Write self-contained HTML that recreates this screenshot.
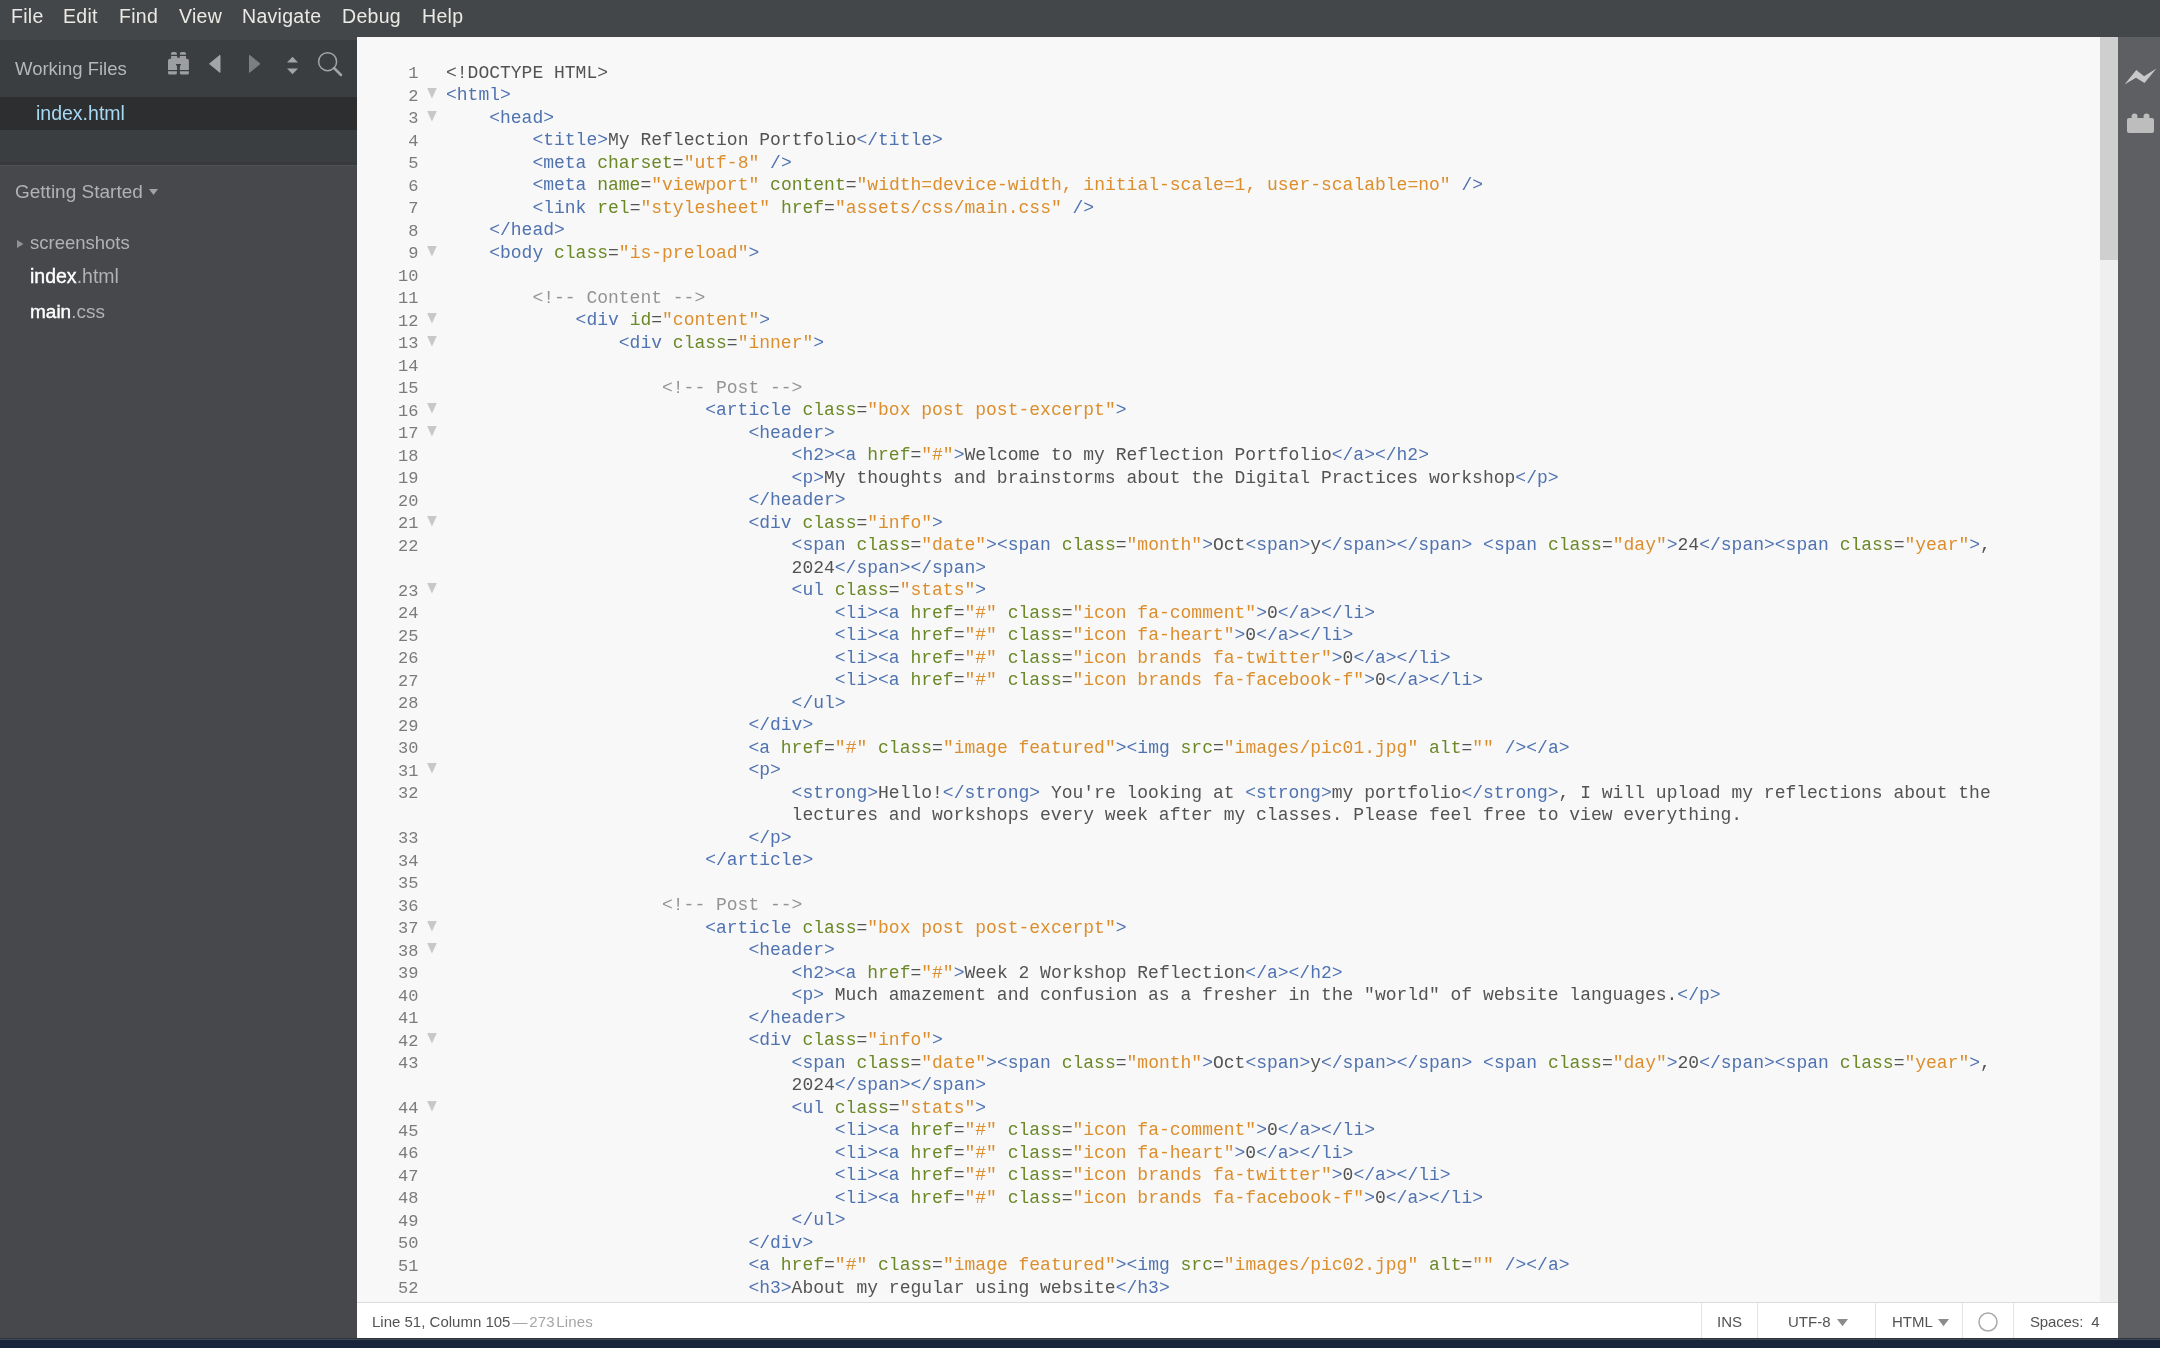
<!DOCTYPE html>
<html><head><meta charset="utf-8">
<style>
html,body{margin:0;padding:0;width:2160px;height:1348px;overflow:hidden;background:#47484b;}
body{position:relative;font-family:"Liberation Sans",sans-serif;}
#menubar{will-change:transform;position:absolute;left:0;top:0;width:2160px;height:40px;background:#44474a;}
#menubar span{position:absolute;top:5px;font-size:19.5px;letter-spacing:0.3px;color:#ebe9e4;line-height:22px;}
#sidebar{will-change:transform;position:absolute;left:0;top:40px;width:357px;height:1298px;background:#47484b;}
#wshead{position:absolute;left:0;top:0;width:357px;height:57px;background:#3b3e40;}
#wshead .ttl{position:absolute;left:15px;top:18px;font-size:18.5px;color:#b5b7b9;line-height:22px;}
#wssel{position:absolute;left:0;top:57px;width:357px;height:33px;background:#2d2e30;}
#wssel span{position:absolute;left:36px;top:5px;font-size:19.5px;color:#a6d9f4;line-height:22px;}
#wsrest{position:absolute;left:0;top:90px;width:357px;height:35px;background:linear-gradient(#3b3e40 0,#3b3e40 32px,#38393c 32px);}
#wsborder{position:absolute;left:0;top:125px;width:357px;height:1px;background:#505155;}
.side{position:absolute;font-size:18.5px;line-height:22px;color:#b0b2b4;}
#editor{position:absolute;left:357px;top:37px;width:1761px;height:1265px;background:#f8f8f8;overflow:hidden;}
#code{position:absolute;left:0;top:0;width:2160px;height:1302px;will-change:transform;}
.ln{position:absolute;left:357px;width:61.5px;margin-top:1.6px;text-align:right;font-family:"Liberation Mono",monospace;font-size:17px;line-height:22.5px;color:#7b7b7b;}
.fd{position:absolute;left:427px;width:10px;height:11px;}
.cl{position:absolute;white-space:pre;font-family:"Liberation Mono",monospace;font-size:18px;line-height:22.5px;color:#535353;}
b{font-weight:normal}
b.t{color:#4f72b0}
b.a{color:#6b8826}
b.s{color:#dc8e2c}
b.c{color:#949494}
#sbtrack{position:absolute;left:2100px;top:37px;width:18px;height:1265px;background:#efefef;}
#sbthumb{position:absolute;left:2100px;top:37px;width:18px;height:223px;background:#cfcfcf;}
#toolbar{position:absolute;left:2118px;top:37px;width:42px;height:1301px;background:#5e5f62;}
#status{will-change:transform;position:absolute;left:357px;top:1302px;width:1761px;height:36px;background:#fff;border-top:1px solid #dcdcdc;box-sizing:border-box;}
#status>span{position:absolute;font-size:15px;line-height:18px;color:#535353;margin-top:1.5px;}
.dv{position:absolute;top:0;width:1px;height:36px;background:#e3e3e3;}
.tri{position:absolute;width:0;height:0;border-left:5.5px solid transparent;border-right:5.5px solid transparent;border-top:7.5px solid #8a8a8a;}
#taskbar{position:absolute;left:0;top:1338px;width:2160px;height:10px;background:linear-gradient(#2f333a 0,#2f333a 1px,#3e4854 1px,#3e4854 2px,#182439 2px);}
</style></head><body>
<div id="menubar">
<span style="left:11px">File</span>
<span style="left:63px">Edit</span>
<span style="left:119px">Find</span>
<span style="left:179px">View</span>
<span style="left:242px">Navigate</span>
<span style="left:342px">Debug</span>
<span style="left:422px">Help</span>
</div>
<div id="sidebar">
 <div id="wshead"><span class="ttl">Working Files</span>
  <svg style="position:absolute;left:155px;top:8px" width="190" height="40" viewBox="155 48 190 40">
   <g fill="#9d9ea1">
    <path d="M170.9 54.8 v-1 a1.8 1.8 0 0 1 1.8 -1.8 h2.4 a1.8 1.8 0 0 1 1.8 1.8 v1 z"/>
    <path d="M179.9 54.8 v-1 a1.8 1.8 0 0 1 1.8 -1.8 h2.5 a1.8 1.8 0 0 1 1.8 1.8 v1 z"/>
    <path d="M171.1 56 h6 v1.8 h2.7 v-1.8 h6.2 v2.7 h0.9 a2 2 0 0 1 2 2 v9.3 h-20.9 v-9.3 a2 2 0 0 1 2 -2 h1.1 z M175.8 64 h5.3 l-1.3 2.7 v3.3 h-2.7 v-3.3 z" fill-rule="evenodd"/>
    <path d="M168 71.2 h8.9 v1.8 a1.6 1.6 0 0 1 -1.6 1.6 h-5.7 a1.6 1.6 0 0 1 -1.6 -1.6 z"/>
    <path d="M179.9 71.2 h9 v1.8 a1.6 1.6 0 0 1 -1.6 1.6 h-5.8 a1.6 1.6 0 0 1 -1.6 -1.6 z"/>
   </g>
   <path d="M209.5 63.8 L220 55.3 L220 72.4 Z" fill="#a3a4a6" stroke="#a3a4a6" stroke-width="1" stroke-linejoin="round"/>
   <path d="M260 63.8 L249.5 55.3 L249.5 72.4 Z" fill="#7c7e81" stroke="#7c7e81" stroke-width="1" stroke-linejoin="round"/>
   <path d="M287 62.5 L292.5 56.7 L298 62.5 Z M287 68.5 L292.5 74.3 L298 68.5 Z" fill="#a3a4a6"/>
   <circle cx="327.6" cy="61.7" r="9" fill="none" stroke="#a3a4a6" stroke-width="1.5"/>
   <path d="M334 68 L341 75" stroke="#a3a4a6" stroke-width="2.5" stroke-linecap="round"/>
  </svg>
 </div>
 <div id="wssel"><span>index.html</span></div>
 <div id="wsrest"></div>
 <div id="wsborder"></div>
 <span class="side" style="left:15px;top:141px;font-size:19px">Getting Started</span>
 <svg style="position:absolute;left:149px;top:149px" width="10" height="8"><path d="M0 0 H9 L4.5 6 Z" fill="#a0a2a4"/></svg>
 <svg style="position:absolute;left:17px;top:200px" width="8" height="10"><path d="M0 0 L6.5 4 L0 8 Z" fill="#909295"/></svg>
 <span class="side" style="left:30px;top:191.5px">screenshots</span>
 <span class="side" style="left:30px;top:225px;font-size:19.5px"><span style="color:#fff;-webkit-text-stroke:0.4px #fff">index</span>.html</span>
 <span class="side" style="left:30px;top:261px;font-size:19px"><span style="color:#fff;-webkit-text-stroke:0.4px #fff">main</span>.css</span>
</div>
<div id="editor"></div>
<div id="sbtrack"></div>
<div id="sbthumb"></div>
<div id="code">
<div class="ln" style="top:61.5px">1</div>
<div class="ln" style="top:84.0px">2</div>
<svg class="fd" style="top:88.4px" viewBox="0 0 10 11"><path d="M0.1 0 H9.8 L4.95 10.6 Z" fill="#c8c8c8"/></svg>
<div class="ln" style="top:106.5px">3</div>
<svg class="fd" style="top:110.9px" viewBox="0 0 10 11"><path d="M0.1 0 H9.8 L4.95 10.6 Z" fill="#c8c8c8"/></svg>
<div class="ln" style="top:129.0px">4</div>
<div class="ln" style="top:151.5px">5</div>
<div class="ln" style="top:174.0px">6</div>
<div class="ln" style="top:196.5px">7</div>
<div class="ln" style="top:219.0px">8</div>
<div class="ln" style="top:241.5px">9</div>
<svg class="fd" style="top:245.9px" viewBox="0 0 10 11"><path d="M0.1 0 H9.8 L4.95 10.6 Z" fill="#c8c8c8"/></svg>
<div class="ln" style="top:264.0px">10</div>
<div class="ln" style="top:286.5px">11</div>
<div class="ln" style="top:309.0px">12</div>
<svg class="fd" style="top:313.4px" viewBox="0 0 10 11"><path d="M0.1 0 H9.8 L4.95 10.6 Z" fill="#c8c8c8"/></svg>
<div class="ln" style="top:331.5px">13</div>
<svg class="fd" style="top:335.9px" viewBox="0 0 10 11"><path d="M0.1 0 H9.8 L4.95 10.6 Z" fill="#c8c8c8"/></svg>
<div class="ln" style="top:354.0px">14</div>
<div class="ln" style="top:376.5px">15</div>
<div class="ln" style="top:399.0px">16</div>
<svg class="fd" style="top:403.4px" viewBox="0 0 10 11"><path d="M0.1 0 H9.8 L4.95 10.6 Z" fill="#c8c8c8"/></svg>
<div class="ln" style="top:421.5px">17</div>
<svg class="fd" style="top:425.9px" viewBox="0 0 10 11"><path d="M0.1 0 H9.8 L4.95 10.6 Z" fill="#c8c8c8"/></svg>
<div class="ln" style="top:444.0px">18</div>
<div class="ln" style="top:466.5px">19</div>
<div class="ln" style="top:489.0px">20</div>
<div class="ln" style="top:511.5px">21</div>
<svg class="fd" style="top:515.9px" viewBox="0 0 10 11"><path d="M0.1 0 H9.8 L4.95 10.6 Z" fill="#c8c8c8"/></svg>
<div class="ln" style="top:534.0px">22</div>
<div class="ln" style="top:579.0px">23</div>
<svg class="fd" style="top:583.4px" viewBox="0 0 10 11"><path d="M0.1 0 H9.8 L4.95 10.6 Z" fill="#c8c8c8"/></svg>
<div class="ln" style="top:601.5px">24</div>
<div class="ln" style="top:624.0px">25</div>
<div class="ln" style="top:646.5px">26</div>
<div class="ln" style="top:669.0px">27</div>
<div class="ln" style="top:691.5px">28</div>
<div class="ln" style="top:714.0px">29</div>
<div class="ln" style="top:736.5px">30</div>
<div class="ln" style="top:759.0px">31</div>
<svg class="fd" style="top:763.4px" viewBox="0 0 10 11"><path d="M0.1 0 H9.8 L4.95 10.6 Z" fill="#c8c8c8"/></svg>
<div class="ln" style="top:781.5px">32</div>
<div class="ln" style="top:826.5px">33</div>
<div class="ln" style="top:849.0px">34</div>
<div class="ln" style="top:871.5px">35</div>
<div class="ln" style="top:894.0px">36</div>
<div class="ln" style="top:916.5px">37</div>
<svg class="fd" style="top:920.9px" viewBox="0 0 10 11"><path d="M0.1 0 H9.8 L4.95 10.6 Z" fill="#c8c8c8"/></svg>
<div class="ln" style="top:939.0px">38</div>
<svg class="fd" style="top:943.4px" viewBox="0 0 10 11"><path d="M0.1 0 H9.8 L4.95 10.6 Z" fill="#c8c8c8"/></svg>
<div class="ln" style="top:961.5px">39</div>
<div class="ln" style="top:984.0px">40</div>
<div class="ln" style="top:1006.5px">41</div>
<div class="ln" style="top:1029.0px">42</div>
<svg class="fd" style="top:1033.4px" viewBox="0 0 10 11"><path d="M0.1 0 H9.8 L4.95 10.6 Z" fill="#c8c8c8"/></svg>
<div class="ln" style="top:1051.5px">43</div>
<div class="ln" style="top:1096.5px">44</div>
<svg class="fd" style="top:1100.9px" viewBox="0 0 10 11"><path d="M0.1 0 H9.8 L4.95 10.6 Z" fill="#c8c8c8"/></svg>
<div class="ln" style="top:1119.0px">45</div>
<div class="ln" style="top:1141.5px">46</div>
<div class="ln" style="top:1164.0px">47</div>
<div class="ln" style="top:1186.5px">48</div>
<div class="ln" style="top:1209.0px">49</div>
<div class="ln" style="top:1231.5px">50</div>
<div class="ln" style="top:1254.0px">51</div>
<div class="ln" style="top:1276.5px">52</div>
<div class="cl" style="top:61.5px;left:446.0px">&lt;!DOCTYPE HTML&gt;</div>
<div class="cl" style="top:84.0px;left:446.0px"><b class="t">&lt;html</b><b class="t">&gt;</b></div>
<div class="cl" style="top:106.5px;left:489.2px"><b class="t">&lt;head</b><b class="t">&gt;</b></div>
<div class="cl" style="top:129.0px;left:532.4px"><b class="t">&lt;title</b><b class="t">&gt;</b>My Reflection Portfolio<b class="t">&lt;/title</b><b class="t">&gt;</b></div>
<div class="cl" style="top:151.5px;left:532.4px"><b class="t">&lt;meta</b> <b class="a">charset</b>=<b class="s">"utf-8"</b> <b class="t">/&gt;</b></div>
<div class="cl" style="top:174.0px;left:532.4px"><b class="t">&lt;meta</b> <b class="a">name</b>=<b class="s">"viewport"</b> <b class="a">content</b>=<b class="s">"width=device-width, initial-scale=1, user-scalable=no"</b> <b class="t">/&gt;</b></div>
<div class="cl" style="top:196.5px;left:532.4px"><b class="t">&lt;link</b> <b class="a">rel</b>=<b class="s">"stylesheet"</b> <b class="a">href</b>=<b class="s">"assets/css/main.css"</b> <b class="t">/&gt;</b></div>
<div class="cl" style="top:219.0px;left:489.2px"><b class="t">&lt;/head</b><b class="t">&gt;</b></div>
<div class="cl" style="top:241.5px;left:489.2px"><b class="t">&lt;body</b> <b class="a">class</b>=<b class="s">"is-preload"</b><b class="t">&gt;</b></div>
<div class="cl" style="top:286.5px;left:532.4px"><b class="c">&lt;!-- Content --&gt;</b></div>
<div class="cl" style="top:309.0px;left:575.6px"><b class="t">&lt;div</b> <b class="a">id</b>=<b class="s">"content"</b><b class="t">&gt;</b></div>
<div class="cl" style="top:331.5px;left:618.8px"><b class="t">&lt;div</b> <b class="a">class</b>=<b class="s">"inner"</b><b class="t">&gt;</b></div>
<div class="cl" style="top:376.5px;left:662.0px"><b class="c">&lt;!-- Post --&gt;</b></div>
<div class="cl" style="top:399.0px;left:705.2px"><b class="t">&lt;article</b> <b class="a">class</b>=<b class="s">"box post post-excerpt"</b><b class="t">&gt;</b></div>
<div class="cl" style="top:421.5px;left:748.4px"><b class="t">&lt;header</b><b class="t">&gt;</b></div>
<div class="cl" style="top:444.0px;left:791.6px"><b class="t">&lt;h2</b><b class="t">&gt;</b><b class="t">&lt;a</b> <b class="a">href</b>=<b class="s">"#"</b><b class="t">&gt;</b>Welcome to my Reflection Portfolio<b class="t">&lt;/a</b><b class="t">&gt;</b><b class="t">&lt;/h2</b><b class="t">&gt;</b></div>
<div class="cl" style="top:466.5px;left:791.6px"><b class="t">&lt;p</b><b class="t">&gt;</b>My thoughts and brainstorms about the Digital Practices workshop<b class="t">&lt;/p</b><b class="t">&gt;</b></div>
<div class="cl" style="top:489.0px;left:748.4px"><b class="t">&lt;/header</b><b class="t">&gt;</b></div>
<div class="cl" style="top:511.5px;left:748.4px"><b class="t">&lt;div</b> <b class="a">class</b>=<b class="s">"info"</b><b class="t">&gt;</b></div>
<div class="cl" style="top:534.0px;left:791.6px"><b class="t">&lt;span</b> <b class="a">class</b>=<b class="s">"date"</b><b class="t">&gt;</b><b class="t">&lt;span</b> <b class="a">class</b>=<b class="s">"month"</b><b class="t">&gt;</b>Oct<b class="t">&lt;span</b><b class="t">&gt;</b>y<b class="t">&lt;/span</b><b class="t">&gt;</b><b class="t">&lt;/span</b><b class="t">&gt;</b> <b class="t">&lt;span</b> <b class="a">class</b>=<b class="s">"day"</b><b class="t">&gt;</b>24<b class="t">&lt;/span</b><b class="t">&gt;</b><b class="t">&lt;span</b> <b class="a">class</b>=<b class="s">"year"</b><b class="t">&gt;</b>, </div>
<div class="cl" style="top:556.5px;left:791.6px">2024<b class="t">&lt;/span</b><b class="t">&gt;</b><b class="t">&lt;/span</b><b class="t">&gt;</b></div>
<div class="cl" style="top:579.0px;left:791.6px"><b class="t">&lt;ul</b> <b class="a">class</b>=<b class="s">"stats"</b><b class="t">&gt;</b></div>
<div class="cl" style="top:601.5px;left:834.8px"><b class="t">&lt;li</b><b class="t">&gt;</b><b class="t">&lt;a</b> <b class="a">href</b>=<b class="s">"#"</b> <b class="a">class</b>=<b class="s">"icon fa-comment"</b><b class="t">&gt;</b>0<b class="t">&lt;/a</b><b class="t">&gt;</b><b class="t">&lt;/li</b><b class="t">&gt;</b></div>
<div class="cl" style="top:624.0px;left:834.8px"><b class="t">&lt;li</b><b class="t">&gt;</b><b class="t">&lt;a</b> <b class="a">href</b>=<b class="s">"#"</b> <b class="a">class</b>=<b class="s">"icon fa-heart"</b><b class="t">&gt;</b>0<b class="t">&lt;/a</b><b class="t">&gt;</b><b class="t">&lt;/li</b><b class="t">&gt;</b></div>
<div class="cl" style="top:646.5px;left:834.8px"><b class="t">&lt;li</b><b class="t">&gt;</b><b class="t">&lt;a</b> <b class="a">href</b>=<b class="s">"#"</b> <b class="a">class</b>=<b class="s">"icon brands fa-twitter"</b><b class="t">&gt;</b>0<b class="t">&lt;/a</b><b class="t">&gt;</b><b class="t">&lt;/li</b><b class="t">&gt;</b></div>
<div class="cl" style="top:669.0px;left:834.8px"><b class="t">&lt;li</b><b class="t">&gt;</b><b class="t">&lt;a</b> <b class="a">href</b>=<b class="s">"#"</b> <b class="a">class</b>=<b class="s">"icon brands fa-facebook-f"</b><b class="t">&gt;</b>0<b class="t">&lt;/a</b><b class="t">&gt;</b><b class="t">&lt;/li</b><b class="t">&gt;</b></div>
<div class="cl" style="top:691.5px;left:791.6px"><b class="t">&lt;/ul</b><b class="t">&gt;</b></div>
<div class="cl" style="top:714.0px;left:748.4px"><b class="t">&lt;/div</b><b class="t">&gt;</b></div>
<div class="cl" style="top:736.5px;left:748.4px"><b class="t">&lt;a</b> <b class="a">href</b>=<b class="s">"#"</b> <b class="a">class</b>=<b class="s">"image featured"</b><b class="t">&gt;</b><b class="t">&lt;img</b> <b class="a">src</b>=<b class="s">"images/pic01.jpg"</b> <b class="a">alt</b>=<b class="s">""</b> <b class="t">/&gt;</b><b class="t">&lt;/a</b><b class="t">&gt;</b></div>
<div class="cl" style="top:759.0px;left:748.4px"><b class="t">&lt;p</b><b class="t">&gt;</b></div>
<div class="cl" style="top:781.5px;left:791.6px"><b class="t">&lt;strong</b><b class="t">&gt;</b>Hello!<b class="t">&lt;/strong</b><b class="t">&gt;</b> You're looking at <b class="t">&lt;strong</b><b class="t">&gt;</b>my portfolio<b class="t">&lt;/strong</b><b class="t">&gt;</b>, I will upload my reflections about the </div>
<div class="cl" style="top:804.0px;left:791.6px">lectures and workshops every week after my classes. Please feel free to view everything.</div>
<div class="cl" style="top:826.5px;left:748.4px"><b class="t">&lt;/p</b><b class="t">&gt;</b></div>
<div class="cl" style="top:849.0px;left:705.2px"><b class="t">&lt;/article</b><b class="t">&gt;</b></div>
<div class="cl" style="top:894.0px;left:662.0px"><b class="c">&lt;!-- Post --&gt;</b></div>
<div class="cl" style="top:916.5px;left:705.2px"><b class="t">&lt;article</b> <b class="a">class</b>=<b class="s">"box post post-excerpt"</b><b class="t">&gt;</b></div>
<div class="cl" style="top:939.0px;left:748.4px"><b class="t">&lt;header</b><b class="t">&gt;</b></div>
<div class="cl" style="top:961.5px;left:791.6px"><b class="t">&lt;h2</b><b class="t">&gt;</b><b class="t">&lt;a</b> <b class="a">href</b>=<b class="s">"#"</b><b class="t">&gt;</b>Week 2 Workshop Reflection<b class="t">&lt;/a</b><b class="t">&gt;</b><b class="t">&lt;/h2</b><b class="t">&gt;</b></div>
<div class="cl" style="top:984.0px;left:791.6px"><b class="t">&lt;p</b><b class="t">&gt;</b> Much amazement and confusion as a fresher in the "world" of website languages.<b class="t">&lt;/p</b><b class="t">&gt;</b></div>
<div class="cl" style="top:1006.5px;left:748.4px"><b class="t">&lt;/header</b><b class="t">&gt;</b></div>
<div class="cl" style="top:1029.0px;left:748.4px"><b class="t">&lt;div</b> <b class="a">class</b>=<b class="s">"info"</b><b class="t">&gt;</b></div>
<div class="cl" style="top:1051.5px;left:791.6px"><b class="t">&lt;span</b> <b class="a">class</b>=<b class="s">"date"</b><b class="t">&gt;</b><b class="t">&lt;span</b> <b class="a">class</b>=<b class="s">"month"</b><b class="t">&gt;</b>Oct<b class="t">&lt;span</b><b class="t">&gt;</b>y<b class="t">&lt;/span</b><b class="t">&gt;</b><b class="t">&lt;/span</b><b class="t">&gt;</b> <b class="t">&lt;span</b> <b class="a">class</b>=<b class="s">"day"</b><b class="t">&gt;</b>20<b class="t">&lt;/span</b><b class="t">&gt;</b><b class="t">&lt;span</b> <b class="a">class</b>=<b class="s">"year"</b><b class="t">&gt;</b>, </div>
<div class="cl" style="top:1074.0px;left:791.6px">2024<b class="t">&lt;/span</b><b class="t">&gt;</b><b class="t">&lt;/span</b><b class="t">&gt;</b></div>
<div class="cl" style="top:1096.5px;left:791.6px"><b class="t">&lt;ul</b> <b class="a">class</b>=<b class="s">"stats"</b><b class="t">&gt;</b></div>
<div class="cl" style="top:1119.0px;left:834.8px"><b class="t">&lt;li</b><b class="t">&gt;</b><b class="t">&lt;a</b> <b class="a">href</b>=<b class="s">"#"</b> <b class="a">class</b>=<b class="s">"icon fa-comment"</b><b class="t">&gt;</b>0<b class="t">&lt;/a</b><b class="t">&gt;</b><b class="t">&lt;/li</b><b class="t">&gt;</b></div>
<div class="cl" style="top:1141.5px;left:834.8px"><b class="t">&lt;li</b><b class="t">&gt;</b><b class="t">&lt;a</b> <b class="a">href</b>=<b class="s">"#"</b> <b class="a">class</b>=<b class="s">"icon fa-heart"</b><b class="t">&gt;</b>0<b class="t">&lt;/a</b><b class="t">&gt;</b><b class="t">&lt;/li</b><b class="t">&gt;</b></div>
<div class="cl" style="top:1164.0px;left:834.8px"><b class="t">&lt;li</b><b class="t">&gt;</b><b class="t">&lt;a</b> <b class="a">href</b>=<b class="s">"#"</b> <b class="a">class</b>=<b class="s">"icon brands fa-twitter"</b><b class="t">&gt;</b>0<b class="t">&lt;/a</b><b class="t">&gt;</b><b class="t">&lt;/li</b><b class="t">&gt;</b></div>
<div class="cl" style="top:1186.5px;left:834.8px"><b class="t">&lt;li</b><b class="t">&gt;</b><b class="t">&lt;a</b> <b class="a">href</b>=<b class="s">"#"</b> <b class="a">class</b>=<b class="s">"icon brands fa-facebook-f"</b><b class="t">&gt;</b>0<b class="t">&lt;/a</b><b class="t">&gt;</b><b class="t">&lt;/li</b><b class="t">&gt;</b></div>
<div class="cl" style="top:1209.0px;left:791.6px"><b class="t">&lt;/ul</b><b class="t">&gt;</b></div>
<div class="cl" style="top:1231.5px;left:748.4px"><b class="t">&lt;/div</b><b class="t">&gt;</b></div>
<div class="cl" style="top:1254.0px;left:748.4px"><b class="t">&lt;a</b> <b class="a">href</b>=<b class="s">"#"</b> <b class="a">class</b>=<b class="s">"image featured"</b><b class="t">&gt;</b><b class="t">&lt;img</b> <b class="a">src</b>=<b class="s">"images/pic02.jpg"</b> <b class="a">alt</b>=<b class="s">""</b> <b class="t">/&gt;</b><b class="t">&lt;/a</b><b class="t">&gt;</b></div>
<div class="cl" style="top:1276.5px;left:748.4px"><b class="t">&lt;h3</b><b class="t">&gt;</b>About my regular using website<b class="t">&lt;/h3</b><b class="t">&gt;</b></div>
</div>
<div id="toolbar">
 <svg style="position:absolute;left:0;top:0" width="42" height="120" viewBox="2118 37 42 120">
  <path d="M2124.5 84.5 L2136.3 70 L2144.1 76.3 L2156.4 68.5 L2144.5 83 L2136 77.8 Z" fill="#c8c8c8"/>
  <rect x="2127" y="118" width="27" height="15" rx="2" fill="#bdbdbd"/>
  <rect x="2131.5" y="113.5" width="6" height="6" rx="3" fill="#bdbdbd"/>
  <rect x="2143.5" y="113.5" width="6" height="6" rx="3" fill="#bdbdbd"/>
 </svg>
</div>
<div id="status">
 <span style="left:15px;top:8px">Line 51, Column 105 <span style="color:#a6a6a6;word-spacing:-3px;margin-left:-2px;letter-spacing:0.2px">— 273 Lines</span></span>
 <div class="dv" style="left:1344px"></div>
 <span style="left:1360px;top:8px">INS</span>
 <div class="dv" style="left:1400px"></div>
 <span style="left:1431px;top:8px">UTF-8</span>
 <svg style="position:absolute;left:1479.5px;top:15.5px" width="12" height="8"><path d="M0 0 H11 L5.5 7.3 Z" fill="#8c8c8c"/></svg>
 <div class="dv" style="left:1518px"></div>
 <span style="left:1535px;top:8px">HTML</span>
 <svg style="position:absolute;left:1581px;top:15.5px" width="12" height="8"><path d="M0 0 H11 L5.5 7.3 Z" fill="#8c8c8c"/></svg>
 <div class="dv" style="left:1605px"></div>
 <svg style="position:absolute;left:1620px;top:8px" width="22" height="22"><circle cx="11" cy="11" r="9" fill="none" stroke="#aaaaaa" stroke-width="1.5"/></svg>
 <div class="dv" style="left:1656px"></div>
 <span style="left:1673px;top:8px;letter-spacing:-0.15px">Spaces:&nbsp; 4</span>
</div>
<div id="taskbar"></div>
</body></html>
